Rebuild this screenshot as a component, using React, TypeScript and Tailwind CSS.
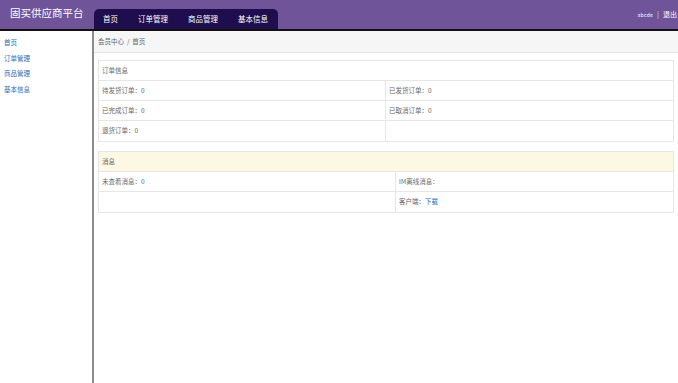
import React from 'react';

const font = { fontFamily: '"Noto Sans CJK SC", "Noto Sans", sans-serif' };

const navItems = ['首页', '订单管理', '商品管理', '基本信息'];
const sideItems = ['首页', '订单管理', '商品管理', '基本信息'];

export default function App() {
  return (
    <div className="w-[678px] h-[383px] overflow-hidden bg-white" style={font}>
      {/* header */}
      <div className="h-[31px] bg-[#6f5499] border-b-2 border-[#111] flex items-end relative">
        <div className="absolute left-[10px] top-[5px] text-[10.5px] leading-[16px] text-white">固买供应商平台</div>
        <div className="ml-[94px] h-[20px] bg-[#1e0e4e] rounded-t-[5px] flex items-center text-white text-[7.5px] pl-[9px] pr-[10px] gap-[20px]">
          {navItems.map((n) => (
            <span key={n}>{n}</span>
          ))}
        </div>
        <div className="ml-auto mr-[1px] self-center flex items-center text-white">
          <span className="text-[5px] tracking-[0.3px]">abcde</span>
          <span className="mx-[4px] text-[7px] opacity-80">|</span>
          <span className="text-[7px]">退出</span>
        </div>
      </div>

      <div className="flex h-[352px]">
        {/* sidebar */}
        <div className="w-[94px] shrink-0 border-r-2 border-[#8c8c8c] pt-[4px] pl-[4px] flex flex-col text-[6.5px] text-[#2a6cb4] leading-[15.6px]">
          {sideItems.map((s) => (
            <span key={s}>{s}</span>
          ))}
        </div>

        {/* main */}
        <div className="flex-1 flex flex-col text-[6.5px] text-[#666]">
          <div className="h-[22px] bg-[#f6f6f6] border-b border-[#e3e3e3] flex items-center pl-[4px]">会员中心&nbsp;&nbsp;/&nbsp;&nbsp;首页</div>

          <div className="mt-[7px] ml-[4px] mr-[4px] border border-[#e6e6e6]">
            <div className="h-[20px] flex items-center pl-[3px] border-b border-[#e6e6e6]">订单信息</div>
            <div className="grid grid-cols-2">
              <div className="h-[20px] flex items-center pl-[3px] border-b border-r border-[#e6e6e6]">待发货订单：0</div>
              <div className="h-[20px] flex items-center pl-[3px] border-b border-[#e6e6e6]">已发货订单：0</div>
              <div className="h-[20px] flex items-center pl-[3px] border-b border-r border-[#e6e6e6]">已完成订单：0</div>
              <div className="h-[20px] flex items-center pl-[3px] border-b border-[#e6e6e6]">已取消订单：0</div>
              <div className="h-[20px] flex items-center pl-[3px] border-r border-[#e6e6e6]">退货订单：0</div>
              <div className="h-[20px]"></div>
            </div>
          </div>

          <div className="mt-[9px] ml-[4px] mr-[4px] border border-[#e6e6e6]">
            <div className="h-[20px] flex items-center pl-[3px] bg-[#fcf8e3] border-b border-[#e6e6e6]">消息</div>
            <div className="grid grid-cols-[297px_1fr]">
              <div className="h-[20px] flex items-center pl-[3px] border-b border-r border-[#e6e6e6]">
                未查看消息：<span className="text-[#2a6cb4]">0</span>
              </div>
              <div className="h-[20px] flex items-center pl-[3px] border-b border-[#e6e6e6]">IM离线消息：</div>
              <div className="h-[20px] border-r border-[#e6e6e6]"></div>
              <div className="h-[20px] flex items-center pl-[3px]">
                客户端：<span className="text-[#2a6cb4]">下载</span>
              </div>
            </div>
          </div>
        </div>
      </div>
    </div>
  );
}
